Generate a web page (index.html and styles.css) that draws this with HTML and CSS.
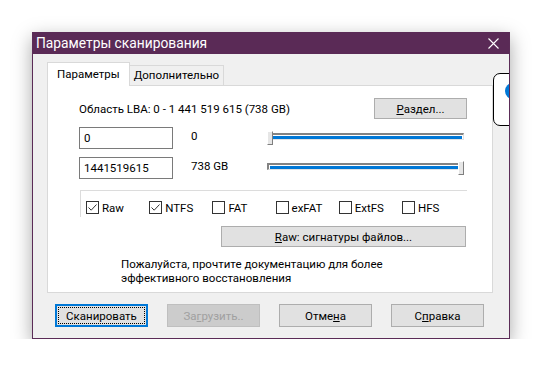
FILE: index.html
```html
<!DOCTYPE html>
<html>
<head>
<meta charset="utf-8">
<link rel="stylesheet" href="styles.css">
</head>
<body>
<div class="dialog">
  <div class="titlebar">
    <span class="title">Параметры сканирования</span>
    <svg class="close" width="11" height="11" viewBox="0 0 11 11"><path d="M0.5 0.5 L10.5 10.5 M10.5 0.5 L0.5 10.5" stroke="#fff" stroke-width="1.1" fill="none"/></svg>
  </div>
  <div class="body">
    <div class="tabs">
      <div class="tab active">Параметры</div>
      <div class="tab">Дополнительно</div>
    </div>
    <div class="panel">
      <div class="row1">
        <span>Область LBA: 0 - 1 441 519 615 (738 GB)</span>
        <div class="btn btn-part"><u>Р</u>аздел...</div>
      </div>
      <div class="range-row first">
        <div class="input">0</div>
        <span class="lbl">0</span>
        <div class="slider">
          <div class="track"><div class="fill"></div></div>
          <div class="thumb left"></div>
        </div>
      </div>
      <div class="range-row">
        <div class="input">1441519615</div>
        <span class="lbl">738 GB</span>
        <div class="slider">
          <div class="track"><div class="fill"></div></div>
          <div class="thumb right"></div>
        </div>
      </div>
      <div class="group">
        <label class="cb"><span class="box checked"><svg width="11" height="11" viewBox="0 0 11 11"><path d="M1.5 5.5 L4.2 8.2 L9.5 2.5" stroke="#333" stroke-width="1" fill="none"/></svg></span>Raw</label>
        <label class="cb"><span class="box checked"><svg width="11" height="11" viewBox="0 0 11 11"><path d="M1.5 5.5 L4.2 8.2 L9.5 2.5" stroke="#333" stroke-width="1" fill="none"/></svg></span>NTFS</label>
        <label class="cb"><span class="box"></span>FAT</label>
        <label class="cb"><span class="box"></span>exFAT</label>
        <label class="cb"><span class="box"></span>ExtFS</label>
        <label class="cb"><span class="box"></span>HFS</label>
      </div>
      <div class="btn btn-raw"><u>R</u>aw: сигнатуры файлов...</div>
      <p class="note">Пожалуйста, прочтите документацию для более<br>эффективного восстановления</p>
    </div>
    <div class="buttons">
      <div class="btn btn-main default"><span class="focus">Сканировать</span></div>
      <div class="btn btn-main disabled">За<u>г</u>рузить..</div>
      <div class="btn btn-main">Отме<u>н</u>а</div>
      <div class="btn btn-main">С<u>п</u>равка</div>
    </div>
    <div class="bubble"><span class="dot"></span></div>
  </div>
</div>
</body>
</html>
```
FILE: styles.css
```css
html, body {
  margin: 0;
  padding: 0;
  background: #fff;
}
body {
  font-family: Roboto, "Noto Sans", sans-serif;
  font-size: 11.5px;
  color: #000;
  padding: 32px 0 0 32px;
}
.dialog {
  width: 476px;
  height: 306px;
  border: 1px solid #5b2c57;
  border-top: 0;
  background: #f0f0f0;
  box-shadow: 0 6px 18px rgba(0, 0, 0, 0.35);
  display: flex;
  flex-direction: column;
  overflow: hidden;
  position: relative;
}
.titlebar {
  height: 22px;
  flex: none;
  background: #5a2a56;
  color: #fff;
  display: flex;
  align-items: center;
  padding: 0 10px 0 4px;
  margin: 0 -1px;
}
.title {
  flex: 1;
  font-size: 13.8px;
}
.close {
  margin-right: 1px;
}
.body {
  flex: 1;
  position: relative;
  padding: 8px 0 0 14px;
}
.tabs {
  display: flex;
  align-items: flex-end;
  height: 23px;
}
.tab {
  border: 1px solid #d9d9d9;
  border-bottom: 0;
  padding: 0 4px;
  height: 19px;
  line-height: 19px;
  background: #f0f0f0;
  margin-left: -1px;
}
.tab.active {
  background: #fff;
  height: 23px;
  line-height: 22px;
  padding: 0 9px;
  margin-left: 0;
  margin-bottom: -1px;
  position: relative;
  z-index: 1;
}
.panel {
  width: 446px;
  height: 208px;
  border: 1px solid #d9d9d9;
  background: #fff;
  padding: 12px 0 0 31px;
  box-sizing: border-box;
}
.row1 {
  display: flex;
  align-items: center;
  height: 21px;
  width: 388px;
  justify-content: space-between;
}
.btn {
  background: #e1e1e1;
  border: 1px solid #adadad;
  display: flex;
  align-items: center;
  justify-content: center;
  box-sizing: border-box;
}
.btn-part {
  width: 93px;
  height: 21px;
}
.range-row {
  display: grid;
  grid-template-columns: 112px 76px 197px;
  align-items: center;
  height: 22px;
  margin-top: 8px;
}
.input {
  width: 94px;
  height: 22px;
  box-sizing: border-box;
  border: 1px solid #7a7a7a;
  padding-left: 4px;
  line-height: 20px;
}
.lbl {
  position: relative;
  top: -2px;
}
.slider {
  position: relative;
  height: 14px;
}
.track {
  position: absolute;
  left: 0;
  right: 0;
  top: 2px;
  height: 7px;
  box-sizing: border-box;
  border-top: 2px solid #838383;
  border-left: 2px solid #838383;
  border-right: 1px solid #e3e3e3;
  border-bottom: 1px solid #e3e3e3;
  padding: 1px;
}
.fill {
  height: 3px;
  background: #0078d7;
}
.thumb {
  position: absolute;
  top: 0;
  width: 6px;
  height: 14px;
  box-sizing: border-box;
  background: #e6e6e6;
  border-top: 1px solid #fff;
  border-left: 1px solid #fff;
  border-right: 1px solid #7f7f7f;
  border-bottom: 1px solid #7f7f7f;
}
.thumb.left { left: 0; }
.thumb.right { right: 0; }
.group {
  margin-top: 11px;
  margin-left: 1px;
  width: 387px;
  height: 27px;
  box-sizing: border-box;
  border-top: 1px solid #dcdcdc;
  border-left: 1px solid #dcdcdc;
  display: grid;
  grid-template-columns: repeat(6, 63.2px);
  padding: 10px 0 0 5px;
}
.cb {
  display: flex;
  align-items: center;
  height: 13px;
  gap: 3px;
}
.box {
  width: 13px;
  height: 13px;
  box-sizing: border-box;
  border: 1px solid #333;
  background: #fff;
  display: flex;
  align-items: center;
  justify-content: center;
}
.btn-raw {
  margin: 9px 0 0 142px;
  width: 245px;
  height: 21px;
}
.note {
  margin: 10px 0 0 42px;
  line-height: 14px;
}
.buttons {
  display: flex;
  gap: 19px;
  margin: 11px 0 0 8px;
}
.btn-main {
  width: 93px;
  height: 23px;
}
.btn.default {
  border: 2px solid #0078d7;
  padding: 1px;
}
.focus {
  flex: 1;
  align-self: stretch;
  border: 1px dotted #000;
  display: flex;
  align-items: center;
  justify-content: center;
}
.btn.disabled {
  background: #cccccc;
  border-color: #bfbfbf;
  color: #a0a0a0;
}
.bubble {
  position: absolute;
  left: 460px;
  top: 19px;
  width: 40px;
  height: 53px;
  box-sizing: border-box;
  border: 1px solid #000;
  border-radius: 7px;
  background: #fff;
}
.dot {
  position: absolute;
  left: 11px;
  top: 9px;
  width: 16px;
  height: 16px;
  border-radius: 50%;
  background: #0078d7;
}
```
